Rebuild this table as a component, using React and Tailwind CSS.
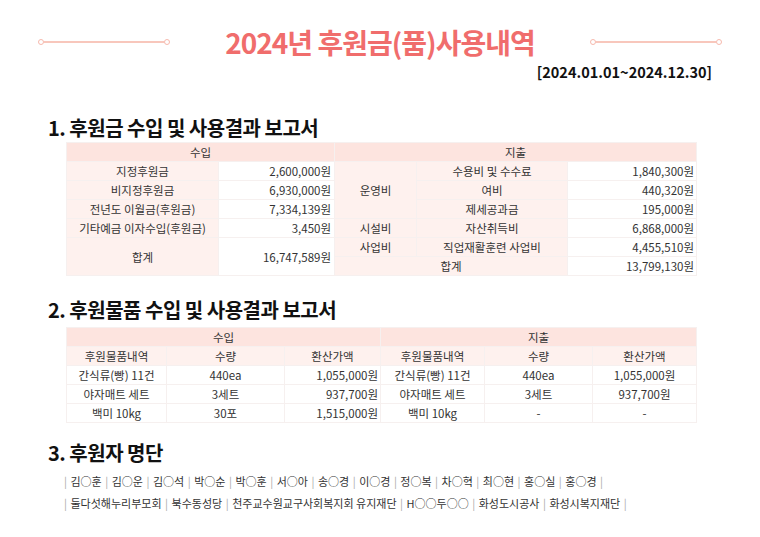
import React from "react";

const F = { fontFamily: '"Noto Sans CJK KR", "Noto Sans", sans-serif' };

function DecoLine() {
  return (
    <div className="relative flex items-center w-[132px] h-[8px]">
      <div className="w-[6px] h-[6px] rounded-full border-[1.5px] border-[#f6b9ad] bg-white shrink-0" />
      <div className="flex-1 h-[2px] bg-[#f8c7bc]" />
      <div className="w-[6px] h-[6px] rounded-full border-[1.5px] border-[#f6b9ad] bg-white shrink-0" />
    </div>
  );
}

const pink = "bg-[#fef1ee]";
const head = "bg-[#fde4df]";
const cell = "h-[18px] p-0 border border-[#f6f0ef] text-center align-middle";

function Table1() {
  return (
    <table className="border-collapse table-fixed w-[630px] text-[11.5px] text-[#333] leading-[18px]">
      <colgroup>
        <col className="w-[152px]" />
        <col className="w-[116px]" />
        <col className="w-[82px]" />
        <col className="w-[151px]" />
        <col className="w-[129px]" />
      </colgroup>
      <tbody>
        <tr>
          <td colSpan={2} className={`${cell} ${head}`}>수입</td>
          <td colSpan={3} className={`${cell} ${head}`}>지출</td>
        </tr>
        <tr>
          <td className={`${cell} ${pink}`}>지정후원금</td>
          <td className={`${cell} text-right pr-[3px]`}>2,600,000원</td>
          <td rowSpan={3} className={`${cell} ${pink}`}>운영비</td>
          <td className={`${cell} ${pink}`}>수용비 및 수수료</td>
          <td className={`${cell} text-right pr-[2px]`}>1,840,300원</td>
        </tr>
        <tr>
          <td className={`${cell} ${pink}`}>비지정후원금</td>
          <td className={`${cell} text-right pr-[3px]`}>6,930,000원</td>
          <td className={`${cell} ${pink}`}>여비</td>
          <td className={`${cell} text-right pr-[2px]`}>440,320원</td>
        </tr>
        <tr>
          <td className={`${cell} ${pink}`}>전년도 이월금(후원금)</td>
          <td className={`${cell} text-right pr-[3px]`}>7,334,139원</td>
          <td className={`${cell} ${pink}`}>제세공과금</td>
          <td className={`${cell} text-right pr-[2px]`}>195,000원</td>
        </tr>
        <tr>
          <td className={`${cell} ${pink}`}>기타예금 이자수입(후원금)</td>
          <td className={`${cell} text-right pr-[3px]`}>3,450원</td>
          <td className={`${cell} ${pink}`}>시설비</td>
          <td className={`${cell} ${pink}`}>자산취득비</td>
          <td className={`${cell} text-right pr-[2px]`}>6,868,000원</td>
        </tr>
        <tr>
          <td rowSpan={2} className={`${cell} ${pink}`}>합계</td>
          <td rowSpan={2} className={`${cell} text-right pr-[3px]`}>16,747,589원</td>
          <td className={`${cell} ${pink}`}>사업비</td>
          <td className={`${cell} ${pink}`}>직업재활훈련 사업비</td>
          <td className={`${cell} text-right pr-[2px]`}>4,455,510원</td>
        </tr>
        <tr>
          <td colSpan={2} className={`${cell} ${pink}`}>합계</td>
          <td className={`${cell} text-right pr-[2px]`}>13,799,130원</td>
        </tr>
      </tbody>
    </table>
  );
}

function Table2() {
  const rowsL = [
    ["간식류(빵) 11건", "440ea", "1,055,000원"],
    ["야자매트 세트", "3세트", "937,700원"],
    ["백미 10kg", "30포", "1,515,000원"],
  ];
  const rowsR = [
    ["간식류(빵) 11건", "440ea", "1,055,000원"],
    ["야자매트 세트", "3세트", "937,700원"],
    ["백미 10kg", "-", "-"],
  ];
  return (
    <table className="border-collapse table-fixed w-[630px] text-[11.5px] text-[#333] leading-[18px]">
      <colgroup>
        <col className="w-[100px]" />
        <col className="w-[118px]" />
        <col className="w-[96px]" />
        <col className="w-[104px]" />
        <col className="w-[108px]" />
        <col className="w-[104px]" />
      </colgroup>
      <tbody>
        <tr>
          <td colSpan={3} className={`${cell} ${head}`}>수입</td>
          <td colSpan={3} className={`${cell} ${head}`}>지출</td>
        </tr>
        <tr>
          <td className={`${cell} ${pink}`}>후원물품내역</td>
          <td className={`${cell} ${pink}`}>수량</td>
          <td className={`${cell} ${pink}`}>환산가액</td>
          <td className={`${cell} ${pink}`}>후원물품내역</td>
          <td className={`${cell} ${pink}`}>수량</td>
          <td className={`${cell} ${pink}`}>환산가액</td>
        </tr>
        {rowsL.map((r, i) => (
          <tr key={i}>
            <td className={cell}>{r[0]}</td>
            <td className={cell}>{r[1]}</td>
            <td className={`${cell} text-right pr-[2px]`}>{r[2]}</td>
            <td className={cell}>{rowsR[i][0]}</td>
            <td className={cell}>{rowsR[i][1]}</td>
            <td className={cell}>{rowsR[i][2]}</td>
          </tr>
        ))}
      </tbody>
    </table>
  );
}

function NameLine({ items }) {
  return (
    <div className="flex items-center h-[18px] text-[11px] text-[#333] leading-[18px] whitespace-nowrap">
      <span className="text-[#aaa] mr-[3.5px]">|</span>
      {items.map((n, i) => (
        <React.Fragment key={i}>
          <span>{n}</span>
          <span className="text-[#aaa] mx-[3.5px]">|</span>
        </React.Fragment>
      ))}
    </div>
  );
}

export default function App() {
  const names1 = ["김○훈", "김○운", "김○석", "박○순", "박○훈", "서○아", "송○경", "이○경", "정○복", "차○혁", "최○현", "홍○실", "홍○경"];
  const names2 = ["둘다섯해누리부모회", "북수동성당", "천주교수원교구사회복지회 유지재단", "H○○두○○", "화성도시공사", "화성시복지재단"];
  return (
    <div style={F} className="w-[760px] h-[537px] bg-white overflow-hidden">
      <div className="mt-[24px] h-[36px] flex items-center px-[38px]">
        <DecoLine />
        <div className="flex-1 text-center text-[28px] font-bold text-[#f06d6c] tracking-[-1px] leading-[36px]">
          2024년 후원금(품)사용내역
        </div>
        <DecoLine />
      </div>
      <div className="mt-[2px] h-[20px] text-right pr-[48px] text-[14.5px] font-bold text-[#111] leading-[20px]">
        [2024.01.01~2024.12.30]
      </div>
      <div className="mt-[34px] h-[24px] pl-[48px] text-[20px] font-bold text-[#111] leading-[24px] tracking-[-0.5px]">
        1. 후원금 수입 및 사용결과 보고서
      </div>
      <div className="mt-[2px] pl-[66px]">
        <Table1 />
      </div>
      <div className="mt-[22px] h-[24px] pl-[48px] text-[20px] font-bold text-[#111] leading-[24px] tracking-[-0.5px]">
        2. 후원물품 수입 및 사용결과 보고서
      </div>
      <div className="mt-[5px] pl-[66px]">
        <Table2 />
      </div>
      <div className="mt-[18px] h-[24px] pl-[48px] text-[20px] font-bold text-[#111] leading-[24px] tracking-[-0.5px]">
        3. 후원자 명단
      </div>
      <div className="mt-[7px] pl-[64px]">
        <NameLine items={names1} />
      </div>
      <div className="mt-[4px] pl-[64px]">
        <NameLine items={names2} />
      </div>
    </div>
  );
}
